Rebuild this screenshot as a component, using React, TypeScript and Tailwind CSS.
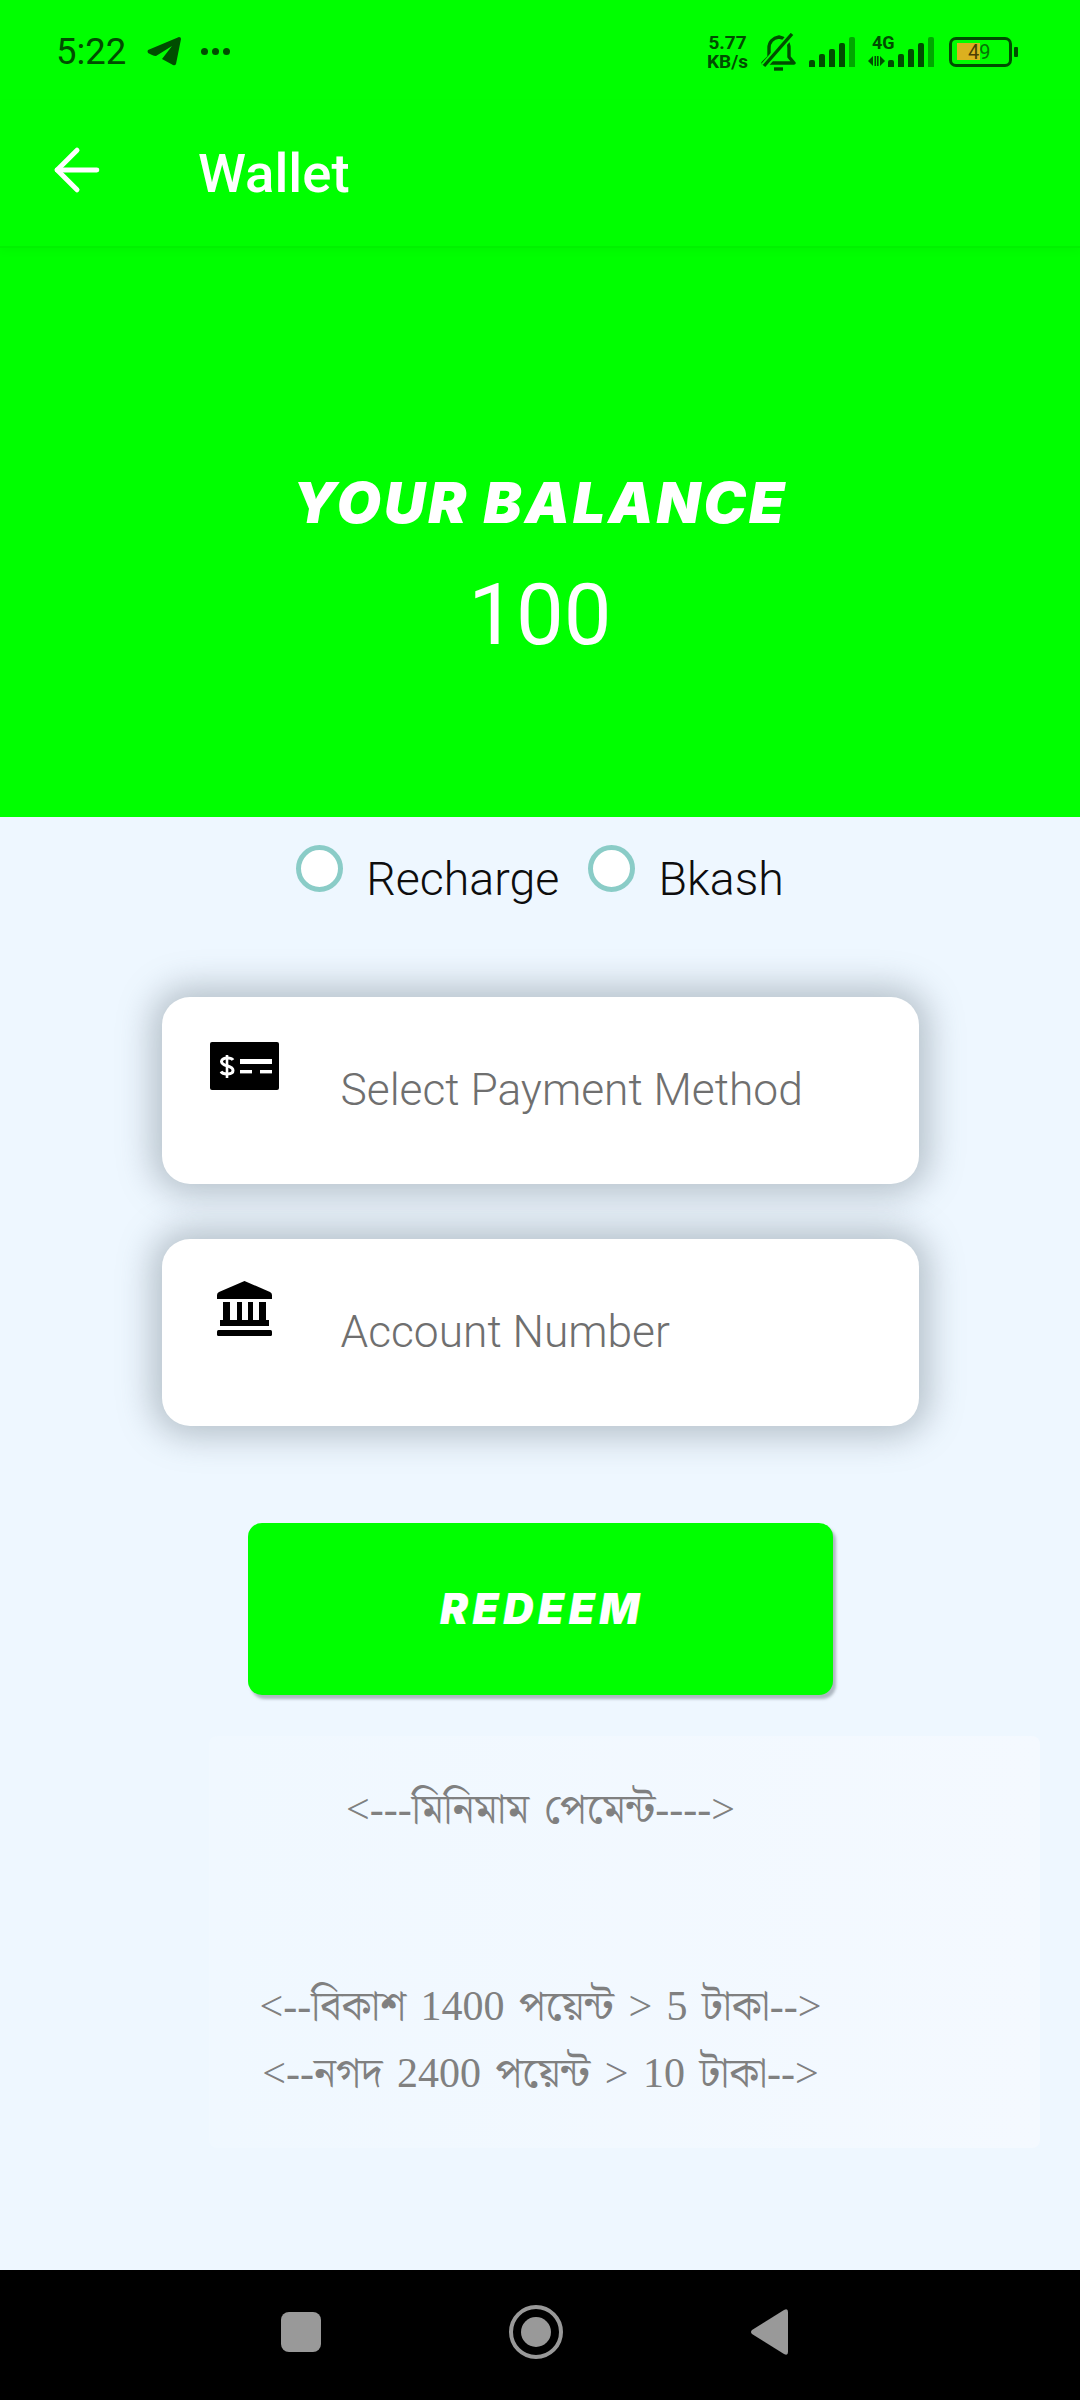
import type { ReactNode } from 'react'
import { ArrowLeft } from 'lucide-react'

const bangla = '"Liberation Serif", "Noto Serif Bengali", "Noto Sans Bengali", serif'

function SignalBars({ className }: { className?: string }) {
  return (
    <div className={`flex items-end gap-[4px] ${className ?? ''}`}>
      {[7, 13, 18, 24].map((h) => (
        <span key={h} className="w-[6px] rounded-t-[2px] bg-[#004d00]" style={{ height: h }} />
      ))}
      <span className="h-[30px] w-[6px] rounded-t-[2px] bg-[#00a800]" />
    </div>
  )
}

function StatusBar() {
  return (
    <div className="flex h-[100px] items-center justify-between pl-[56px] pr-[62px] pt-[3px] text-[#004d00]">
      <div className="flex items-center">
        <span className="font-['Roboto',sans-serif] text-[36.5px] leading-[40px]">5:22</span>
        <svg viewBox="0 0 34 29" className="ml-[21px] h-[29px] w-[34px]" fill="#004d00">
          <path d="M1 13 L32 0 Q34 0 34 2 L29 27 Q28 29 26 28 L15 22 L25 9 L9 19 Q7 19 5 18 L1 16 Q0 14 1 13 Z" />
        </svg>
        <div className="ml-[20px] flex gap-[4px]">
          <span className="size-[7px] rounded-full bg-[#004d00]" />
          <span className="size-[7px] rounded-full bg-[#004d00]" />
          <span className="size-[7px] rounded-full bg-[#004d00]" />
        </div>
      </div>
      <div className="flex items-center">
        <div className="flex flex-col items-center font-['Roboto',sans-serif] text-[19px] font-bold leading-[19px]">
          <span>5.77</span>
          <span>KB/s</span>
        </div>
        <svg viewBox="0 0 35 38" className="ml-[13px] h-[38px] w-[35px]" fill="none" stroke="#004d00" strokeWidth="3.4">
          <path d="M2 30 L8 24 V15 C8 9 12 5 18 4 C24 5 28 9 28 15 V24 L33 30 Z" strokeLinejoin="round" />
          <path d="M13 36 H22" />
          <path d="M3 33 L31 1" stroke="#00ff00" strokeWidth="7" />
          <path d="M3 33 L31 1" />
        </svg>
        <SignalBars className="ml-[13px]" />
        <div className="relative ml-[13px] h-[30px] w-[66px]">
          <span className="absolute left-[4px] top-[-3px] font-['Roboto',sans-serif] text-[18px] font-bold leading-[18px]">
            4G
          </span>
          <svg viewBox="0 0 17 10" className="absolute bottom-[1px] left-0 h-[10px] w-[17px]" fill="#004d00">
            <path d="M0 5 L5 0 V10 Z" />
            <rect x="6.5" width="1.6" height="10" />
            <rect x="9" width="1.6" height="10" />
            <path d="M12 0 L17 5 L12 10 Z" />
          </svg>
          <SignalBars className="absolute bottom-0 right-0" />
        </div>
        <div className="relative ml-[15px] flex h-[30px] w-[63px] items-center rounded-[7px] border-[3px] border-[#004d00] pl-[5px]">
          <div className="h-[17px] w-[23px] bg-[#dcb01f]" />
          <span className="absolute left-[16px] font-['Roboto',sans-serif] text-[20px] leading-[20px]">
            <span className="text-[#4d3d05]">4</span>
            <span className="text-[#067306]">9</span>
          </span>
        </div>
        <div className="ml-[2px] h-[10px] w-[4px] rounded-[1px] bg-[#004d00]" />
      </div>
    </div>
  )
}

function Radio({ label }: { label: string }) {
  return (
    <div className="flex items-start gap-[23px]">
      <span className="size-[47px] rounded-full border-[5px] border-[#8accc7] bg-white" />
      <span className="mt-[4px] font-['Roboto',sans-serif] text-[46.5px] font-light leading-[60px] text-[#0d0d0d]">{label}</span>
    </div>
  )
}

function FieldCard({ icon, label }: { icon: ReactNode; label: string }) {
  return (
    <div className="flex h-[187px] w-[757px] rounded-[28px] bg-white pl-[48px] shadow-[0_0_34px_10px_rgba(95,110,120,0.4)]">
      <div className="flex w-[69px] justify-center pt-[45px]">{icon}</div>
      <span className="ml-[62px] mt-[65px] font-['Roboto',sans-serif] text-[44.3px] font-light leading-[56px] text-[#6f6f6f]">
        {label}
      </span>
    </div>
  )
}

export default function App() {
  return (
    <div className="flex h-[2400px] w-[1080px] flex-col overflow-hidden bg-[#eef7ff]">
      <header className="h-[817px] bg-[#00ff00]">
        <StatusBar />
        <div className="flex h-[148px] items-center border-b-[2px] border-[#00f200] shadow-[0_4px_8px_rgba(0,80,0,0.04)]">
          <ArrowLeft className="mb-[6px] ml-[43px] size-[68px] text-white" strokeWidth={1.76} />
          <h1 className="ml-[87px] font-['Roboto',sans-serif] text-[54.5px] font-medium leading-[64px] text-white">Wallet</h1>
        </div>
        <div className="flex flex-col items-center pt-[225px]">
          <div className="font-['Inter',sans-serif] text-[57px] font-black italic leading-[60px] tracking-[3px] text-white">
            YOUR BALANCE
          </div>
          <div className="mt-[32px] font-['Roboto',sans-serif] text-[85px] leading-[100px] text-white">100</div>
        </div>
      </header>

      <main className="flex flex-1 flex-col items-center">
        <div className="mt-[28px] flex gap-[29px]">
          <Radio label="Recharge" />
          <Radio label="Bkash" />
        </div>

        <div className="mt-[88px] flex flex-col gap-[55px]">
          <FieldCard
            label="Select Payment Method"
            icon={
              <svg viewBox="0 0 69 48" className="h-[48px] w-[69px]">
                <rect width="69" height="48" rx="2" fill="#000" />
                <path d="M23 18 C21 15 12 15 11.5 19.5 C11.5 25 23 22.5 23 28.5 C23 33 13 33 11 29.5" fill="none" stroke="#fff" strokeWidth="3" />
                <path d="M17 13 V36" stroke="#fff" strokeWidth="2.6" />
                <rect x="30" y="17" width="32" height="5" fill="#fff" />
                <rect x="30" y="28" width="12" height="3.4" fill="#fff" />
                <rect x="50" y="28" width="12" height="3.4" fill="#fff" />
              </svg>
            }
          />
          <FieldCard
            label="Account Number"
            icon={
              <svg viewBox="0 0 55 55" className="mt-[-3px] h-[55px] w-[55px]" fill="#000">
                <path d="M27.5 0 L53 11 Q55 12 55 14 V18 H0 V14 Q0 12 2 11 Z" />
                <rect x="6" y="21" width="7" height="18" />
                <rect x="20" y="21" width="5" height="18" />
                <rect x="31" y="21" width="5" height="18" />
                <rect x="42" y="21" width="7" height="18" />
                <rect x="3" y="39" width="49" height="6" />
                <rect y="49" width="55" height="6" rx="1.5" />
              </svg>
            }
          />
        </div>

        <button className="mt-[97px] flex h-[172px] w-[585px] items-center justify-center rounded-[14px] bg-[#00ff00] pl-[4px] shadow-[3px_4px_3px_rgba(130,140,150,0.6)]">
          <span className="font-['Inter',sans-serif] text-[42px] font-black italic leading-[48px] tracking-[4.5px] text-white">REDEEM</span>
        </button>

        <section
          className="ml-[209px] mt-[41px] flex h-[412px] w-[831px] flex-col items-center self-start rounded-[8px] bg-gradient-to-r from-[#f0f8ff] to-[#f4f9ff] pr-[168px] text-[42px] text-[#808080] [word-spacing:4px]"
          style={{ fontFamily: bangla }}
        >
          <p className="mt-[45px] leading-[56px]">&lt;---মিনিমাম পেমেন্ট----&gt;</p>
          <p className="mt-[136px] leading-[67px]">&lt;--বিকাশ 1400 পয়েন্ট &gt; 5 টাকা--&gt;</p>
          <p className="leading-[67px]">&lt;--নগদ 2400 পয়েন্ট &gt; 10 টাকা--&gt;</p>
        </section>
      </main>

      <nav className="flex h-[130px] items-center justify-center bg-black pb-[6px] pr-[11px]">
        <span className="h-[40px] w-[40px] rounded-[8px] bg-[#999999]" />
        <span className="ml-[188px] flex size-[54px] items-center justify-center rounded-full border-[4px] border-[#999999]">
          <span className="size-[30px] rounded-full bg-[#999999]" />
        </span>
        <svg viewBox="0 0 37 46" className="ml-[188px] h-[46px] w-[37px]" fill="#999999">
          <path d="M1 21 L33 1 Q37 -1 37 3 V43 Q37 47 33 45 L1 25 Q-1 23 1 21 Z" />
        </svg>
      </nav>
    </div>
  )
}
